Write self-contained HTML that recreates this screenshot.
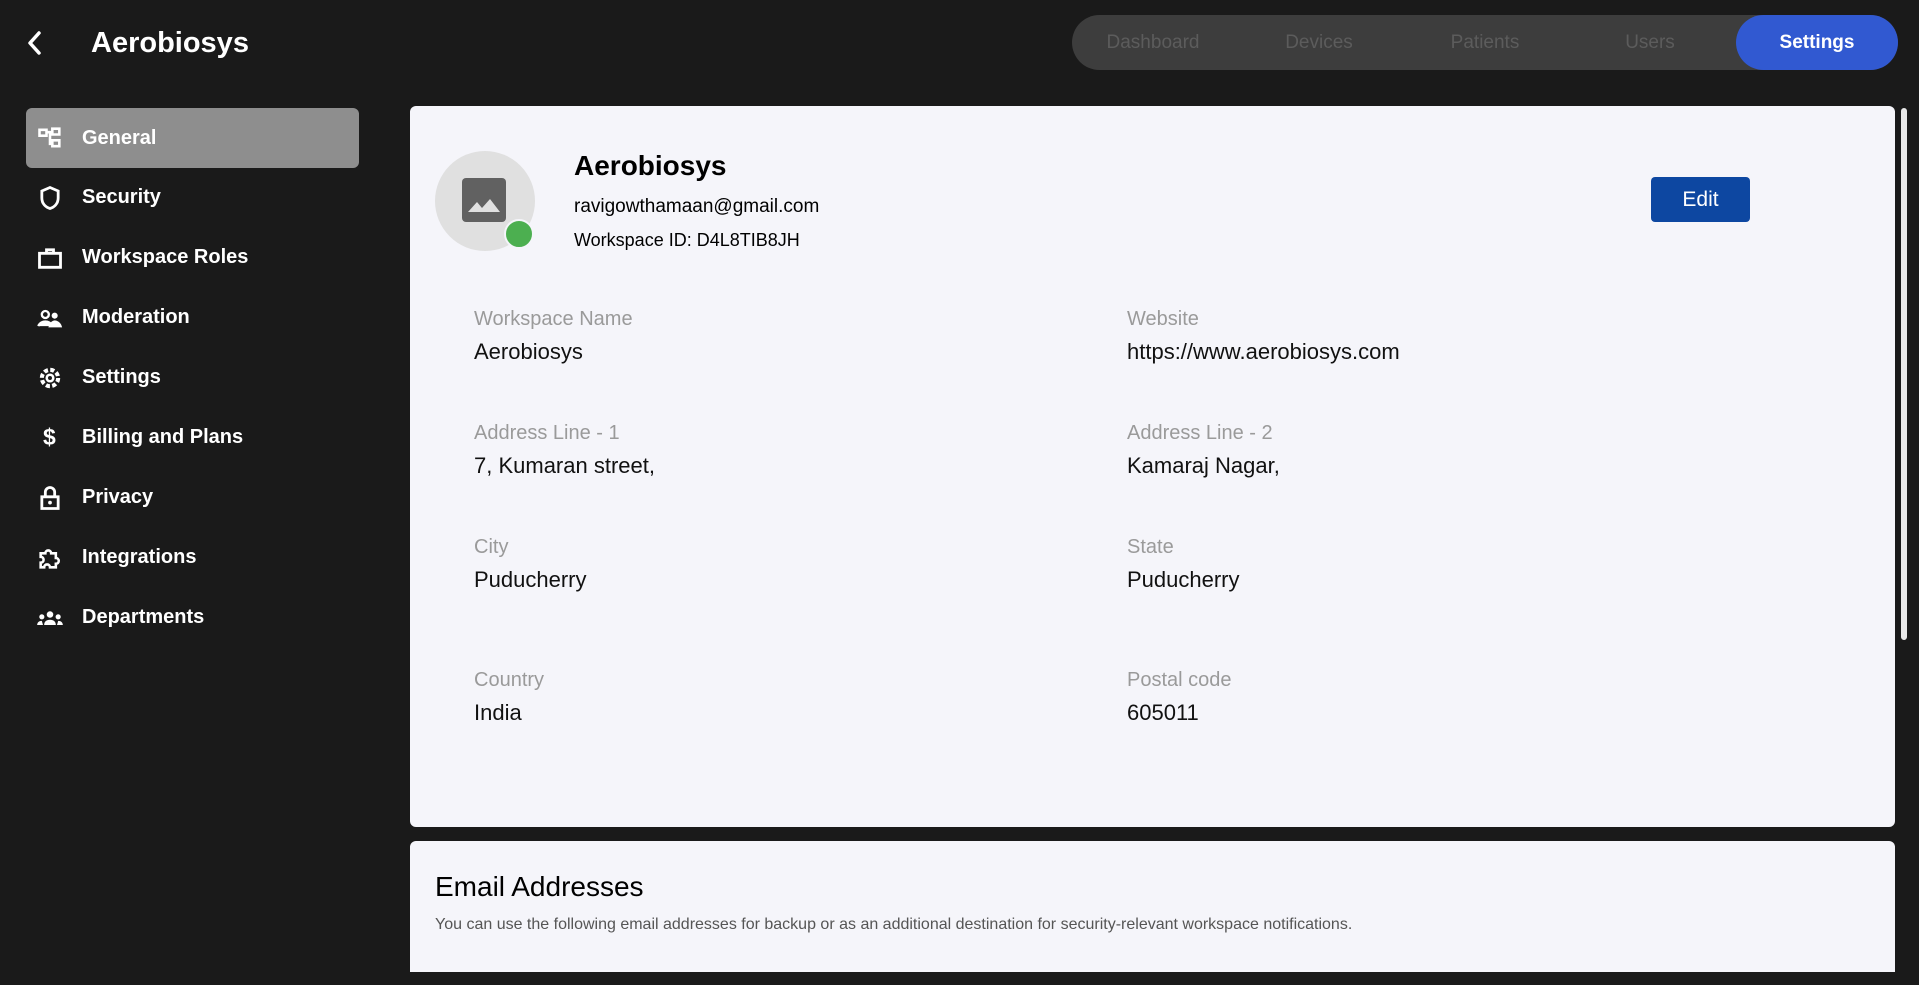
<!DOCTYPE html>
<html><head><meta charset="utf-8"><style>
*{margin:0;padding:0;box-sizing:border-box}
body{width:1919px;height:985px;overflow:hidden;background:#1a1a1a;font-family:"Liberation Sans",sans-serif;position:relative;color:#000}
.abs{position:absolute}
.tab{position:absolute;top:15px;height:55px;line-height:55px;font-size:19px;color:#5c5c5c;text-align:center}
.item{position:absolute;left:26px;width:333px;height:59px;display:flex;align-items:center;color:#fff;font-size:20px;font-weight:bold;border-radius:6px}
.item svg{position:absolute;left:10px;width:28px;height:28px}
.item span{position:absolute;left:56px}
.lbl{position:absolute;font-size:20px;color:#9a9a9a}
.val{position:absolute;font-size:22px;color:#111}
</style></head><body>
<svg class="abs" style="left:24px;top:30px" width="22" height="26" viewBox="0 0 22 26"><path d="M15 3 L6 13 L15 23" stroke="#fff" stroke-width="3.5" fill="none" stroke-linecap="round" stroke-linejoin="round"/></svg>
<div class="abs" style="left:91px;top:27px;font-size:29px;font-weight:bold;color:#fff">Aerobiosys</div>

<div class="abs" style="left:1072px;top:15px;width:826px;height:55px;border-radius:28px;background:#3d3d3d"></div>
<div class="tab" style="left:1093px;width:120px">Dashboard</div>
<div class="tab" style="left:1259px;width:120px">Devices</div>
<div class="tab" style="left:1425px;width:120px">Patients</div>
<div class="tab" style="left:1590px;width:120px">Users</div>
<div class="abs" style="left:1736px;top:15px;width:162px;height:55px;border-radius:28px;background:#3159d1;color:#fff;font-size:19px;font-weight:bold;text-align:center;line-height:55px">Settings</div>

<div class="item" style="top:108px;height:60px;background:#8e8e8e"><svg viewBox="0 0 24 24"><path d="M3 5h6v5H3zM14 4h6v5h-6zM14 14h6v5h-6zM9 7h3v10h2M12 7h2" stroke="#fff" stroke-width="2.2" fill="none"/></svg><span>General</span></div>
<div class="item" style="top:168px"><svg viewBox="0 0 24 24"><path d="M12 3l7 3v6c0 5-3.5 8-7 9-3.5-1-7-4-7-9V6z" stroke="#fff" stroke-width="2.4" fill="none"/></svg><span>Security</span></div>
<div class="item" style="top:228px"><svg viewBox="0 0 24 24"><path d="M3 8h18v12H3zM9 8V5h6v3" stroke="#fff" stroke-width="2.4" fill="none"/></svg><span>Workspace Roles</span></div>
<div class="item" style="top:288px"><svg viewBox="0 0 24 24"><circle cx="8" cy="9" r="3" stroke="#fff" stroke-width="2" fill="none"/><circle cx="16" cy="10" r="2.6" fill="#fff"/><path d="M2 19c1-3 4-4 6-4s5 1 6 4M12 19c1-3 3-4 4-4s4 1 5 4z" stroke="#fff" stroke-width="2" fill="#fff"/></svg><span>Moderation</span></div>
<div class="item" style="top:348px"><svg viewBox="0 0 24 24"><circle cx="12" cy="12" r="7" stroke="#fff" stroke-width="3.5" fill="none" stroke-dasharray="3.5 2"/><circle cx="12" cy="12" r="2.8" stroke="#fff" stroke-width="2.2" fill="none"/></svg><span>Settings</span></div>
<div class="item" style="top:408px"><div class="abs" style="left:17px;font-size:23px;font-weight:bold">$</div><span>Billing and Plans</span></div>
<div class="item" style="top:468px"><svg viewBox="0 0 24 24"><path d="M5 11h14v10H5zM8 11V7a4 4 0 0 1 8 0v4" stroke="#fff" stroke-width="2.4" fill="none"/><circle cx="12" cy="16" r="1.6" fill="#fff"/></svg><span>Privacy</span></div>
<div class="item" style="top:528px"><svg viewBox="0 0 24 24"><path d="M4 8h4a2.5 2.5 0 0 1 5 0h4v4a2.5 2.5 0 0 1 0 5v3h-5a2.5 2.5 0 0 0-5 0H4v-4a2.5 2.5 0 0 0 0-5z" stroke="#fff" stroke-width="2.2" fill="none"/></svg><span>Integrations</span></div>
<div class="item" style="top:588px"><svg viewBox="0 0 24 24"><circle cx="12" cy="9" r="2.8" fill="#fff"/><circle cx="5" cy="11" r="2.2" fill="#fff"/><circle cx="19" cy="11" r="2.2" fill="#fff"/><path d="M7 18c0-3 2-4.5 5-4.5s5 1.5 5 4.5zM1 18c0-2 1.5-3.5 4-3.5l1 3.5zM23 18c0-2-1.5-3.5-4-3.5l-1 3.5z" fill="#fff"/></svg><span>Departments</span></div>

<div class="abs" style="left:410px;top:106px;width:1485px;height:721px;background:#f5f5fa;border-radius:6px"></div>
<div class="abs" style="left:1901px;top:108px;width:6px;height:532px;background:#e8e8e8;border-radius:3px"></div>
<div class="abs" style="left:435px;top:151px;width:100px;height:100px;border-radius:50%;background:#e0e0e0"></div>
<div class="abs" style="left:462px;top:178px;width:44px;height:44px;border-radius:4px;background:#616161"></div>
<svg class="abs" style="left:462px;top:178px" width="44" height="44"><path d="M6 34 L15 24 L20 30 L28 21 L38 34 Z" fill="#e0e0e0"/></svg>
<div class="abs" style="left:504px;top:219px;width:30px;height:30px;border-radius:50%;background:#4caf50;border:2px solid #f5f5fa"></div>
<div class="abs" style="left:574px;top:150px;font-size:28px;font-weight:bold">Aerobiosys</div>
<div class="abs" style="left:574px;top:196px;font-size:19px">ravigowthamaan@gmail.com</div>
<div class="abs" style="left:574px;top:230px;font-size:18px">Workspace ID: D4L8TIB8JH</div>
<div class="abs" style="left:1651px;top:177px;width:99px;height:45px;background:#0d47a1;border-radius:4px;color:#fff;font-size:21px;text-align:center;line-height:45px">Edit</div>

<div class="lbl" style="left:474px;top:308px">Workspace Name</div><div class="val" style="left:474px;top:339px">Aerobiosys</div>
<div class="lbl" style="left:1127px;top:308px">Website</div><div class="val" style="left:1127px;top:339px">https://www.aerobiosys.com</div>
<div class="lbl" style="left:474px;top:422px">Address Line - 1</div><div class="val" style="left:474px;top:453px">7, Kumaran street,</div>
<div class="lbl" style="left:1127px;top:422px">Address Line - 2</div><div class="val" style="left:1127px;top:453px">Kamaraj Nagar,</div>
<div class="lbl" style="left:474px;top:536px">City</div><div class="val" style="left:474px;top:567px">Puducherry</div>
<div class="lbl" style="left:1127px;top:536px">State</div><div class="val" style="left:1127px;top:567px">Puducherry</div>
<div class="lbl" style="left:474px;top:669px">Country</div><div class="val" style="left:474px;top:700px">India</div>
<div class="lbl" style="left:1127px;top:669px">Postal code</div><div class="val" style="left:1127px;top:700px">605011</div>

<div class="abs" style="left:410px;top:841px;width:1485px;height:131px;background:#f5f5fa;border-radius:6px 6px 0 0"></div>
<div class="abs" style="left:435px;top:871px;font-size:28px">Email Addresses</div>
<div class="abs" style="left:435px;top:916px;font-size:16px;color:#555">You can use the following email addresses for backup or as an additional destination for security-relevant workspace notifications.</div>
</body></html>
